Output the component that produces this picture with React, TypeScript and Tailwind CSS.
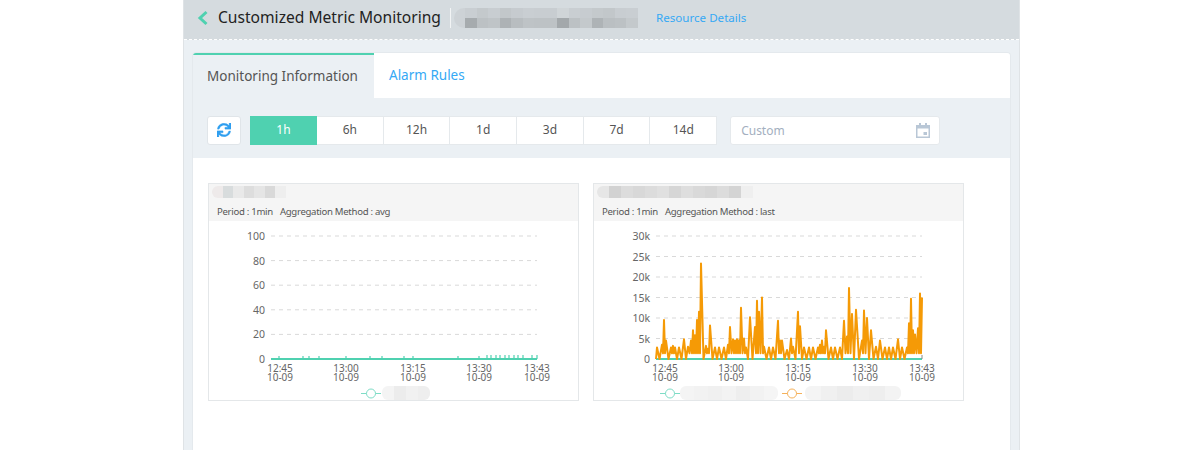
import { FC } from "react";
import { FaSync } from "react-icons/fa";

const ranges = ["1h", "6h", "12h", "1d", "3d", "7d", "14d"];

// peaks read off the chart: [x inside the plot, value in k]
const peaks: [number, number][] = [
	[1, 2.8], [6, 3.5], [8, 9.5], [10, 4.5], [15, 2.8], [17, 3.2], [19, 2.8], [23, 2.8], [28, 4.8], [32, 3], [35, 4.5], [37, 7],
	[39, 5.8], [41, 9.5], [43, 11.5], [45, 23.3], [50, 3.2], [52, 2.5], [54, 8.2], [59, 2.8], [63, 2.8], [68, 2.8], [72, 3.5],
	[74, 7.8], [77, 4.8], [79, 4.5], [81, 4.8], [83, 4.6], [85, 12.5], [88, 5], [90, 2.8], [94, 10.2], [99, 7.8], [101, 14.2],
	[103, 11.5], [106, 15], [108, 3], [113, 2.8], [117, 2.8], [122, 9.3], [124, 4.5], [126, 4.5], [131, 2.2], [135, 5], [137, 3],
	[142, 11.5], [144, 8], [148, 2.8], [153, 2.8], [157, 2.8], [162, 2.8], [164, 3.5], [166, 4.5], [168, 3], [170, 7], [175, 2.8],
	[179, 2.8], [184, 2.8], [188, 9.3], [191, 5.5], [193, 17.3], [196, 11], [200, 12], [206, 4.5], [208, 11.8], [211, 10], [215, 7],
	[220, 3], [224, 4.5], [229, 2.8], [233, 2.8], [237, 2.8], [242, 4.8], [246, 2.8], [251, 2.8], [253, 8.7], [255, 14.7], [257, 7],
	[259, 6], [262, 7.5], [264, 16], [266, 15],
];

const orangeLine = (() => {
	const pts: string[] = ["0,123"];
	peaks.forEach(([x, v], i) => {
		const prev = i > 0 ? peaks[i - 1][0] : 0;
		const low = x - prev > 3 ? 0 : 1.4;
		pts.push(`${(x + prev) / 2},${123 - low * 4.1}`);
		pts.push(`${x},${123 - v * 4.1}`);
	});
	return pts.join(" ");
})();

const greenTicks = [8, 32, 38, 48, 75, 99, 111, 133, 142, 187, 208, 216, 220, 225, 229, 234, 238, 243, 247, 252, 261, 266];

const Mosaic: FC<{ cells: string[]; w: number; h: number; className?: string }> = ({ cells, w, h, className }) => (
	<div className={`flex overflow-hidden ${className || ""}`} style={{ height: h }}>
		{cells.map((c, i) => (
			<div key={i} style={{ width: w, background: c }} />
		))}
	</div>
);

const Plot: FC<{ labels: string[]; second?: boolean }> = ({ labels, second }) => {
	const xs = second ? [9, 75, 142, 209, 266] : [9, 75, 142, 208, 266];
	const times = ["12:45", "13:00", "13:15", "13:30", "13:43"];
	return (
		<svg width="369" height="165" viewBox="-62 -15 369 165" className="block shrink-0" fontFamily="'Noto Sans', sans-serif">
			{labels.map((l, i) => {
				const y = (123 / (labels.length - 1)) * i;
				return (
					<g key={l}>
						{i < labels.length - 1 && <line x1="0" x2="266" y1={y} y2={y} stroke="#d9d9d9" strokeDasharray="4 4" />}
						<text x="-6" y={y + 4} textAnchor="end" fontSize="10.5" fill="#666">{l}</text>
					</g>
				);
			})}
			{xs.map((x, i) => (
				<g key={i}>
					<text x={x} y="136" textAnchor="middle" fontSize="10" fill="#666">{times[i]}</text>
					<text x={x} y="145" textAnchor="middle" fontSize="10" fill="#666">10-09</text>
				</g>
			))}
			<line x1="0" x2="266" y1="123" y2="123" stroke="#4fd1b0" strokeWidth="2" />
			{!second && greenTicks.map((x) => (
				<line key={x} x1={x} x2={x} y1="123" y2={x > 215 ? 119 : 120} stroke="#4fd1b0" strokeWidth="1.2" />
			))}
			{second && (
				<>
					<polyline points={orangeLine} fill="none" stroke="#f59a06" strokeWidth="2" strokeLinejoin="round" />
					<line x1="266" x2="266" y1="123" y2="119" stroke="#888" />
				</>
			)}
		</svg>
	);
};

const Legend: FC<{ color: string }> = ({ color }) => (
	<svg width="20" height="11" viewBox="0 0 20 11" className="shrink-0">
		<line x1="0" x2="20" y1="5.5" y2="5.5" stroke={color} />
		<circle cx="10" cy="5.5" r="4.5" fill="#fff" stroke={color} />
	</svg>
);

const MetricCard: FC<{
	method: string;
	labels: string[];
	second?: boolean;
	title: string[];
}> = ({ method, labels, second, title }) => (
	<div className="w-[371px] h-[218px] border border-[#e4e7e9] bg-white flex flex-col overflow-hidden">
		<div className="h-[37px] bg-[#f5f5f5] pl-[3px] pt-[2px] shrink-0">
			<Mosaic cells={title} w={second ? 12 : 10.5} h={12} className="rounded-l-md" />
			<div className="mt-[7px] pl-[5px] text-[9.6px] leading-[14px] tracking-[-0.3px] text-[#555] whitespace-nowrap">
				Period : 1min<span className="ml-[7px]">Aggregation Method : {method}</span>
			</div>
		</div>
		<Plot labels={labels} second={second} />
		{second ? (
			<div className="flex items-center h-[14px] pl-[66px]">
				<Legend color="#7edcc6" />
				<Mosaic cells={["#f4f4f4", "#f2f2f2", "#f0f0f0", "#f3f3f3", "#eeeeee", "#f2f2f2", "#f5f5f5"]} w={14} h={14} className="rounded-md" />
				<div className="w-[4px]" />
				<Legend color="#f5b15a" />
				<Mosaic cells={["#f4f4f4", "#f0f0f0", "#ececec", "#f0f0f0", "#eeeeee", "#f3f3f3"]} w={16} h={14} className="ml-[3px] rounded-md" />
			</div>
		) : (
			<div className="flex items-center h-[14px] pl-[152px]">
				<Legend color="#7edcc6" />
				<Mosaic cells={["#f4f4f4", "#ececec", "#f1f1f1", "#eeeeee"]} w={12} h={14} className="ml-[1px] rounded-md" />
			</div>
		)}
	</div>
);

export default function App() {
	return (
		<div className="h-[450px] bg-white overflow-hidden font-['Noto_Sans',sans-serif]">
			<div className="w-[837px] h-[450px] ml-[183px] border-x border-[#dfe3e6] bg-[#ebf0f4] flex flex-col">
				<div className="h-[40px] shrink-0 bg-[#d5dbdf] border-b border-dashed border-white flex items-center pl-[13px] pb-[4px]">
					<svg width="12" height="16" viewBox="0 0 12 16" className="shrink-0">
						<path d="M9.5 2 L3 8 L9.5 14" fill="none" stroke="#4fd1b0" strokeWidth="3" />
					</svg>
					<h1 className="ml-[9px] text-[15.6px] text-[#222] font-normal whitespace-nowrap">Customized Metric Monitoring</h1>
					<div className="ml-[9px] w-px h-[20px] bg-[#f2f4f5]" />
					<div className="ml-[3px] w-[184px] h-[20px] rounded-l-[10px] overflow-hidden">
						<Mosaic cells={["#cdd2d6", "#c9ced2", "#c4c9cc", "#c8cdd1", "#c2c7ca", "#c6cbcf", "#c9ced2", "#c8cdd1", "#c8cdd1", "#d0d5d8", "#c9ced2", "#c7ccd0", "#c4c9cc", "#c2c7ca", "#c8cdd1", "#c9ced2"]} w={11.5} h={10} />
						<Mosaic cells={["#cdd2d6", "#a6abae", "#bcc1c4", "#bfc4c7", "#adb2b5", "#b8bdc0", "#bec3c6", "#bdc2c5", "#bdc2c5", "#a3a8ab", "#bcc1c4", "#c4c9cc", "#aeb3b6", "#babfc2", "#bcc1c4", "#c4c9cc"]} w={11.5} h={10} />
					</div>
					<a className="ml-[18px] text-[11.6px] text-[#35a9f5] whitespace-nowrap">Resource Details</a>
				</div>

				<div className="flex-1 mt-[12px] mx-[8px] rounded-t-[4px] border-x border-t border-[#e4e9ed] flex flex-col overflow-hidden">
					<div className="h-[45px] shrink-0 bg-white flex">
						<div className="w-[181px] bg-[#ebf0f4] border-t-2 border-[#4fd1b0] flex items-center justify-center text-[13.5px] text-[#555] pr-[2px]">
							Monitoring Information
						</div>
						<div className="pl-[15px] flex items-center text-[13.5px] text-[#35a9f5]">Alarm Rules</div>
					</div>

					<div className="h-[60px] shrink-0 flex items-center pl-[14px] pt-[4px]">
						<button className="w-[34px] h-[29px] bg-white rounded-[3px] border border-[#e0e5e9] flex items-center justify-center">
							<FaSync size={14} color="#2f9ff0" stroke="#2f9ff0" strokeWidth={10} />
						</button>
						<div className="ml-[9px] flex">
							{ranges.map((r, i) => (
								<div
									key={r}
									className={
										i === 0
											? "w-[67px] h-[29px] bg-[#4fd1b0] text-white flex items-center justify-center text-[12px]"
											: "w-[66.7px] h-[29px] bg-white border border-l-0 border-[#e5e9ec] text-[#555] flex items-center justify-center text-[12px]"
									}
								>
									{r}
								</div>
							))}
						</div>
						<div className="ml-[13px] w-[210px] h-[29px] bg-white rounded-[3px] border border-[#e5e9ec] flex items-center justify-between pl-[10px] pr-[9px]">
							<span className="text-[12px] text-[#a3afc0] relative top-[1px]">Custom</span>
							<svg width="14" height="15" viewBox="0 0 14 15">
								<path d="M3 0h2v2h4V0h2v2h3v13H0V2h3z M1.5 5.5v8h11v-8z" fill="#b9c7d6" fillRule="evenodd" />
								<rect x="7.5" y="9" width="3.5" height="3" fill="#b9c7d6" />
							</svg>
						</div>
					</div>

					<div className="flex-1 bg-white flex gap-[14px] pt-[25px] pl-[15px]">
						<MetricCard
							method="avg"
							labels={["100", "80", "60", "40", "20", "0"]}
							title={["#eeeaea", "#d8dcdd", "#e9e9e9", "#dddddd", "#e5e5e5", "#d9d9d9", "#eeeeee"]}
						/>
						<MetricCard
							method="last"
							second
							labels={["30k", "25k", "20k", "15k", "10k", "5k", "0"]}
							title={["#e6e6e6", "#d2d2d2", "#dcdcdc", "#d8d8d8", "#dcdcdc", "#e0e0e0", "#d6d6d6", "#dedede", "#d9d9d9", "#d6d6d6", "#dcdcdc", "#d4d4d4", "#efefef"]}
						/>
					</div>
				</div>
			</div>
		</div>
	);
}
